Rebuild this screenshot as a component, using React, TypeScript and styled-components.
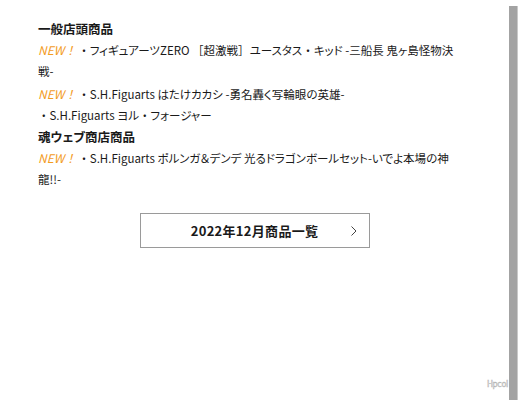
import styled, { createGlobalStyle } from "styled-components";

const GlobalStyle = createGlobalStyle`
  html, body {
    margin: 0;
    padding: 0;
    background: #fff;
  }
  body {
    font-family: "Noto Sans CJK JP", "Noto Sans", sans-serif;
    color: #1a1a1a;
  }
`;

const Page = styled.div`
  position: relative;
  display: flex;
  width: 525px;
  height: 400px;
  overflow: hidden;
`;

const Main = styled.div`
  flex: 1;
  padding: 18px 0 0 38px;
`;

const Content = styled.div`
  width: 433px;
`;

const List = styled.div`
  width: 418px;
  font-size: 11.5px;
  line-height: 21.2px;
  font-feature-settings: "palt";
`;

const Heading = styled.div`
  font-weight: 700;
  font-size: 12.5px;
`;

const Line = styled.div``;

/* full-width punctuation keeps its square box */
const Full = styled.span`
  font-feature-settings: normal;
`;

const New = styled.span`
  color: #f39c1f;
  font-style: italic;
  font-size: 12px;
  font-feature-settings: normal;
  margin-right: 2px;
`;

const ButtonRow = styled.div`
  display: flex;
  justify-content: center;
  margin-top: 22px;
`;

const MoreButton = styled.a`
  position: relative;
  display: flex;
  align-items: center;
  justify-content: center;
  width: 230px;
  height: 35px;
  box-sizing: border-box;
  border: 1px solid #9a9a9a;
  font-size: 13px;
  font-weight: 700;
  color: #1a1a1a;
  letter-spacing: 0.3px;
`;

const Chevron = styled.svg`
  position: absolute;
  right: 12px;
  top: 12px;
`;

const Track = styled.div`
  width: 16px;
  display: flex;
  padding-top: 6px;
  box-sizing: border-box;
`;

const Thumb = styled.div`
  width: 8px;
  background: #a3a3a3;
  border-right: 1px solid #c9c9c9;
`;

const Mark = styled.div`
  position: absolute;
  right: 17px;
  bottom: 11px;
  font-family: "DejaVu Sans", sans-serif;
  font-size: 8px;
  color: #e2e2e2;
  -webkit-text-stroke: 0.4px #b0b0b0;
  letter-spacing: -0.3px;
`;

const App = () => {
  return (
    <Page>
      <GlobalStyle />
      <Main>
        <Content>
          <List>
            <Heading>一般店頭商品</Heading>
            <Line>
              <New>NEW！</New>
              <Full>・</Full>フィギュアーツZERO <Full>［</Full>超激戦<Full>］</Full>ユースタス<Full>・</Full>キッド -三船長 鬼ヶ島怪物決戦-
            </Line>
            <Line>
              <New>NEW！</New>
              <Full>・</Full>S.H.Figuarts はたけカカシ -勇名轟く写輪眼の英雄-
            </Line>
            <Line>
              <Full>・</Full>S.H.Figuarts ヨル<Full>・</Full>フォージャー
            </Line>
            <Heading>魂ウェブ商店商品</Heading>
            <Line>
              <New>NEW！</New>
              <Full>・</Full>S.H.Figuarts ポルンガ＆デンデ 光るドラゴンボールセット-いでよ本場の神龍!!-
            </Line>
          </List>
          <ButtonRow>
            <MoreButton>
              2022年12月商品一覧
              <Chevron width="6" height="10" viewBox="0 0 6 10">
                <path d="M0.5 0.5 L5 5 L0.5 9.5" fill="none" stroke="#444" strokeWidth="1" />
              </Chevron>
            </MoreButton>
          </ButtonRow>
        </Content>
      </Main>
      <Track>
        <Thumb />
      </Track>
      <Mark>Hpcol</Mark>
    </Page>
  );
};

export default App;
